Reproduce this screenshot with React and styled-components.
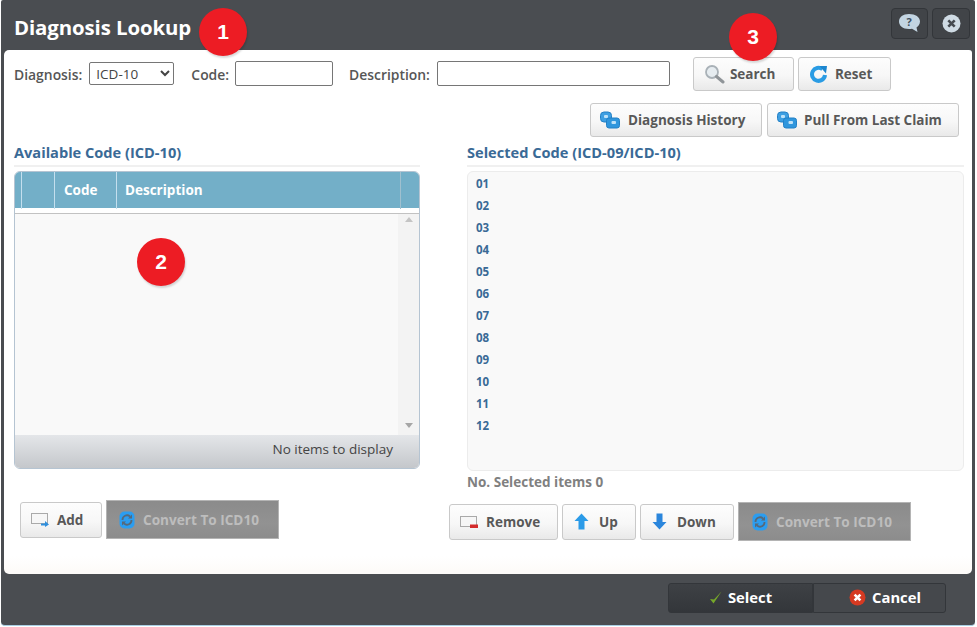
import React from "react";
import styled, { createGlobalStyle } from "styled-components";

const GlobalStyle = createGlobalStyle`
  html, body {
    margin: 0;
    padding: 0;
    background: #fff;
    font-family: "Open Sans", "Liberation Sans", sans-serif;
  }
`;

const Page = styled.div`
  width: 977px;
  height: 627px;
  overflow: hidden;
  position: relative;
  background: #fff;
`;

const Dialog = styled.div`
  width: 974px;
  height: 625px;
  margin-left: 1px;
  background: #4a4d51;
  border-bottom: 1px solid #a9cfe3;
  border-radius: 2px 2px 4px 4px;
  box-sizing: content-box;
  display: flex;
  flex-direction: column;
`;

const TitleBar = styled.div`
  height: 50px;
  display: flex;
  justify-content: space-between;
  padding: 8px 5px 0 13px;
  box-sizing: border-box;
`;

const Title = styled.h1`
  margin: 6px 0 0;
  font-size: 20.4px;
  line-height: 27px;
  font-weight: 700;
  color: #fff;
  letter-spacing: -0.1px;
`;

const TitleActions = styled.div`
  display: flex;
  gap: 4px;
`;

const IconTile = styled.div`
  width: ${(p) => p.$w}px;
  height: 31px;
  border: 1px solid #33363a;
  border-radius: 4px;
  background: #414448;
  box-sizing: border-box;
  display: flex;
  align-items: center;
  justify-content: center;
`;

const Panel = styled.div`
  margin: 0 3px;
  height: 524px;
  background: linear-gradient(#fff 0, #fff 506px, #fdfbf9 520px);
  border-radius: 5px 3px 5px 5px;
  padding: 7px 13px 0 10px;
  box-sizing: border-box;
  display: flex;
  flex-direction: column;
`;

const SearchRow = styled.div`
  display: flex;
  align-items: center;
  height: 34px;
`;

const Label = styled.label`
  font-size: 13.9px;
  font-weight: 600;
  color: #565656;
  white-space: nowrap;
  margin-left: ${(p) => p.$left || 0}px;
  margin-right: ${(p) => p.$right || 0}px;
`;

const Select = styled.select`
  width: 85px;
  height: 23px;
  flex: none;
  margin-bottom: 1px;
  font-family: "Open Sans", sans-serif;
  font-size: 13.5px;
  color: #444;
  background: #fff;
  border: 1px solid #767676;
  border-radius: 2px;
  padding: 0 0 0 2px;
`;

const TextInput = styled.input`
  width: ${(p) => p.$w}px;
  height: 25px;
  flex: none;
  margin-bottom: 2px;
  border: 1px solid #767676;
  border-radius: 2px;
  background: #fff;
  box-sizing: border-box;
  padding: 0 4px;
`;

const Button = styled.button`
  width: ${(p) => p.$w}px;
  height: ${(p) => p.$h || 34}px;
  display: flex;
  align-items: center;
  gap: ${(p) => p.$gap || 8}px;
  padding: 0 0 0 ${(p) => p.$pad || 10}px;
  box-sizing: border-box;
  border: 1px solid #c9c9c9;
  border-radius: 3px;
  background: linear-gradient(#fdfdfd, #f7f7f7 55%, #e9e9e9);
  font-family: "Open Sans", sans-serif;
  font-size: 13.5px;
  font-weight: 700;
  color: #585858;
  white-space: nowrap;
  flex: none;
`;

const GreyButton = styled.button`
  width: ${(p) => p.$w}px;
  height: 39px;
  display: flex;
  align-items: center;
  gap: 8px;
  padding: 0 0 0 ${(p) => p.$pad || 12}px;
  box-sizing: border-box;
  border: 1px solid #b4b4b4;
  background: linear-gradient(#8b8b8b, #929292 60%, #8c8c8c);
  font-family: "Open Sans", sans-serif;
  font-size: 13.6px;
  font-weight: 700;
  color: #bdbdbd;
  white-space: nowrap;
  flex: none;
`;

const ActionsRight = styled.div`
  display: flex;
  gap: 4px;
  margin-left: 23px;
`;

const HistoryRow = styled.div`
  display: flex;
  justify-content: flex-end;
  gap: 5px;
  margin-top: 12px;
`;

const Columns = styled.div`
  display: grid;
  grid-template-columns: 406px 497px;
  column-gap: 47px;
  margin-top: 5px;
`;

const Column = styled.div`
  display: flex;
  flex-direction: column;
`;

const SectionTitle = styled.h2`
  margin: 0;
  height: 23px;
  font-size: 14.6px;
  line-height: 21px;
  font-weight: 700;
  color: #3a6a96;
  border-bottom: 2px solid #f0f0f0;
  box-sizing: content-box;
  white-space: nowrap;
`;

const Grid = styled.div`
  margin-top: 4px;
  height: 298px;
  border: 1px solid #b5c4d2;
  border-radius: 6px;
  box-sizing: border-box;
  overflow: hidden;
  display: flex;
  flex-direction: column;
  background: #f9f9f9;
`;

const GridHead = styled.div`
  height: 36px;
  flex: none;
  background: #73afc8;
  display: grid;
  grid-template-columns: 7px 33px 62px 1fr 18px;
  border-bottom: 5px solid #fff;
  box-shadow: 0 1px 0 #c2c2c2;
`;

const HeadCell = styled.div`
  border-right: 1px solid #c4dfee;
  font-size: 13.5px;
  font-weight: 700;
  color: #fff;
  line-height: 37px;
  padding-left: ${(p) => p.$pad || 0}px;
  &:last-child {
    border-right: 0;
    border-left: 1px solid #a0c0cf;
    margin-left: -1px;
  }
`;

const GridBody = styled.div`
  flex: 1;
  display: flex;
  justify-content: flex-end;
  margin-top: 1px;
`;

const ScrollTrack = styled.div`
  width: 21px;
  background: #f3f3f3;
  display: flex;
  flex-direction: column;
  justify-content: space-between;
  align-items: center;
  padding: 3px 0 7px;
  box-sizing: border-box;
`;

const Arrow = styled.span`
  width: 0;
  height: 0;
  border-left: 4px solid transparent;
  border-right: 4px solid transparent;
  ${(p) =>
    p.$up ? "border-bottom: 5px solid #c4c4c4;" : "border-top: 5px solid #a6a6a6;"}
`;

const GridFooter = styled.div`
  height: 33px;
  flex: none;
  background: linear-gradient(#e4e6e9, #c4c7cb);
  font-size: 13.5px;
  line-height: 29px;
  color: #444;
  text-align: right;
  padding-right: 26px;
`;

const SelectedBox = styled.div`
  margin-top: 4px;
  height: 300px;
  border: 1px solid #ececec;
  border-radius: 6px;
  background: #f9f9f9;
  box-sizing: border-box;
  padding: 1px 0 0 8px;
`;

const CodeRow = styled.div`
  height: 22px;
  line-height: 22px;
  font-size: 11.5px;
  font-weight: 700;
  color: #3a6a96;
`;

const SelectedCount = styled.div`
  font-size: 13.5px;
  font-weight: 700;
  color: #808080;
  margin-top: 2px;
  line-height: 19px;
`;

const ButtonRowLeft = styled.div`
  display: flex;
  align-items: center;
  gap: 4px;
  margin: 31px 0 0 6px;
`;

const ButtonRowRight = styled.div`
  display: flex;
  align-items: center;
  gap: 4px;
  margin: 10px 0 0 -18px;
`;

const Footer = styled.div`
  flex: 1;
  display: flex;
  justify-content: flex-end;
  padding: 9px 29px 0 0;
  box-sizing: border-box;
`;

const FooterButton = styled.button`
  width: ${(p) => p.$w}px;
  height: 30px;
  display: flex;
  align-items: center;
  justify-content: center;
  gap: 6px;
  border: 1px solid #33363a;
  border-radius: ${(p) => (p.$first ? "3px 0 0 3px" : "0 3px 3px 0")};
  background: ${(p) => (p.$first ? "linear-gradient(#3e4145, #33363a)" : "#45484c")};
  font-family: "Open Sans", sans-serif;
  font-size: 14.8px;
  line-height: 26px;
  font-weight: 700;
  color: #fff;
  padding: 0 0 2px ${(p) => p.$shift || 0}px;
`;

const Badge = styled.div`
  position: absolute;
  left: ${(p) => p.$x - 24}px;
  top: ${(p) => p.$y - 24}px;
  width: 48px;
  height: 48px;
  border-radius: 50%;
  background: #ed1c24;
  color: #fff;
  font-family: "Liberation Sans", sans-serif;
  font-size: 21px;
  font-weight: 700;
  display: flex;
  align-items: center;
  justify-content: center;
  box-shadow: 1px 2px 2px rgba(0, 0, 0, 0.15);
`;

const MagnifierIcon = () => (
  <svg width="22" height="20" viewBox="0 0 22 20">
    <circle cx="8" cy="8" r="6" fill="#e6ecf0" stroke="#a9b1b7" strokeWidth="1.8" />
    <path d="M12.5 12.5 L19 18" stroke="#8f9498" strokeWidth="3" strokeLinecap="round" />
  </svg>
);

const ResetIcon = () => (
  <svg width="18" height="18" viewBox="0 0 18 18">
    <path d="M12.5 4.2 A6.5 6.5 0 1 0 15 10" fill="none" stroke="#2a9ce4" strokeWidth="4" />
    <path d="M9.5 1 L17 1 L16 8.5 Z" fill="#1c86cf" />
  </svg>
);

const HistoryIcon = () => (
  <svg width="20" height="18" viewBox="0 0 20 18">
    <rect x="0.5" y="1" width="11" height="10" rx="3.5" fill="#3e9fe2" stroke="#2380c6" />
    <rect x="4" y="4" width="4" height="3" rx="1" fill="#bfe2f8" />
    <rect x="6.5" y="7" width="13" height="10" rx="2.5" fill="#2f96dd" stroke="#2380c6" />
    <rect x="11.5" y="10" width="4.5" height="3" rx="1" fill="#bfe2f8" />
  </svg>
);

const AddIcon = () => (
  <svg width="19" height="15" viewBox="0 0 19 15">
    <rect x="0.5" y="1.5" width="16" height="10" fill="#f6f6f6" stroke="#a9a9a9" />
    <path d="M10 11.5 h4 v-2.5 l4 3.5 -4 2.5 v-1.5 h-4 Z" fill="#2f8fdd" />
  </svg>
);

const RemoveIcon = () => (
  <svg width="19" height="14" viewBox="0 0 19 14">
    <rect x="0.5" y="1.5" width="16" height="10" fill="#f6f6f6" stroke="#a9a9a9" />
    <rect x="10" y="9.5" width="8" height="3.5" fill="#d32b2b" />
  </svg>
);

const UpIcon = () => (
  <svg width="15" height="17" viewBox="0 0 15 17">
    <path d="M7.5 0.5 L14.5 8 H10.5 V16.5 H4.5 V8 H0.5 Z" fill="#2b9be8" />
  </svg>
);

const DownIcon = () => (
  <svg width="15" height="17" viewBox="0 0 15 17">
    <path d="M7.5 16.5 L14.5 9 H10.5 V0.5 H4.5 V9 H0.5 Z" fill="#2b86dc" />
  </svg>
);

const ConvertIcon = () => (
  <svg width="16" height="18" viewBox="0 0 16 18">
    <rect x="0.5" y="0.5" width="15" height="17" rx="5" fill="#2b9df0" />
    <path d="M3.5 9 A4.5 4.5 0 0 1 11 5.5 M12.5 9 A4.5 4.5 0 0 1 5 12.5" fill="none" stroke="#56697a" strokeWidth="1.8" />
    <path d="M9 7.5 L13 7.5 L13 3.5 Z M7 10.5 L3 10.5 L3 14.5 Z" fill="#56697a" />
  </svg>
);

const HelpIcon = () => (
  <svg width="25" height="21" viewBox="0 0 25 21">
    <path d="M12 1 C18.5 1 23 4 23 8.5 C23 11.5 21 13.5 19.5 14.5 L20.5 19 L15 15.7 C14 15.9 13 16 12 16 C5.5 16 2 12.5 2 8.5 C2 4 6 1 12 1 Z" fill="#c3d5e2" />
    <text x="12" y="12.5" fontSize="11" fontWeight="700" fontFamily="Open Sans, sans-serif" textAnchor="middle" fill="#3e4f5c">?</text>
  </svg>
);

const CloseIcon = () => (
  <svg width="19" height="19" viewBox="0 0 19 19">
    <circle cx="9.5" cy="9.5" r="9" fill="#cfdbe4" />
    <path d="M6.3 6.3 L12.7 12.7 M12.7 6.3 L6.3 12.7" stroke="#454a50" strokeWidth="2.6" />
  </svg>
);

const CheckIcon = () => (
  <svg width="13" height="13" viewBox="0 0 13 13">
    <path d="M1 8 L4.5 12.5 L12.5 0.5 L5 8.5 Z" fill="#76a82a" />
  </svg>
);

const CancelIcon = () => (
  <svg width="17" height="17" viewBox="0 0 17 17">
    <circle cx="8.5" cy="8.5" r="8" fill="#d63a22" />
    <path d="M5.6 5.6 L11.4 11.4 M11.4 5.6 L5.6 11.4" stroke="#fff" strokeWidth="2.6" />
  </svg>
);

const codes = ["01", "02", "03", "04", "05", "06", "07", "08", "09", "10", "11", "12"];

export default function App() {
  return (
    <Page>
      <GlobalStyle />
      <Dialog>
        <TitleBar>
          <Title>Diagnosis Lookup</Title>
          <TitleActions>
            <IconTile $w={37}>
              <HelpIcon />
            </IconTile>
            <IconTile $w={38}>
              <CloseIcon />
            </IconTile>
          </TitleActions>
        </TitleBar>
        <Panel>
          <SearchRow>
            <Label $right={7}>Diagnosis:</Label>
            <Select defaultValue="ICD-10">
              <option>ICD-10</option>
              <option>ICD-09</option>
            </Select>
            <Label $left={17} $right={6}>Code:</Label>
            <TextInput $w={98} />
            <Label $left={16} $right={7}>Description:</Label>
            <TextInput $w={233} />
            <ActionsRight>
              <Button $w={101} $gap={4}>
                <MagnifierIcon />
                Search
              </Button>
              <Button $w={93} $pad={11} $gap={7}>
                <ResetIcon />
                Reset
              </Button>
            </ActionsRight>
          </SearchRow>
          <HistoryRow>
            <Button $w={172} $pad={9} $gap={8}>
              <HistoryIcon />
              Diagnosis History
            </Button>
            <Button $w={192} $pad={9} $gap={7}>
              <HistoryIcon />
              Pull From Last Claim
            </Button>
          </HistoryRow>
          <Columns>
            <Column>
              <SectionTitle>Available Code (ICD-10)</SectionTitle>
              <Grid>
                <GridHead>
                  <HeadCell />
                  <HeadCell />
                  <HeadCell $pad={9}>Code</HeadCell>
                  <HeadCell $pad={8}>Description</HeadCell>
                  <HeadCell />
                </GridHead>
                <GridBody>
                  <ScrollTrack>
                    <Arrow $up />
                    <Arrow />
                  </ScrollTrack>
                </GridBody>
                <GridFooter>No items to display</GridFooter>
              </Grid>
              <ButtonRowLeft>
                <Button $w={82} $h={36} $pad={10} $gap={7}>
                  <AddIcon />
                  Add
                </Button>
                <GreyButton $w={173}>
                  <ConvertIcon />
                  Convert To ICD10
                </GreyButton>
              </ButtonRowLeft>
            </Column>
            <Column>
              <SectionTitle>Selected Code (ICD-09/ICD-10)</SectionTitle>
              <SelectedBox>
                {codes.map((c) => (
                  <CodeRow key={c}>{c}</CodeRow>
                ))}
              </SelectedBox>
              <SelectedCount>No. Selected items 0</SelectedCount>
              <ButtonRowRight>
                <Button $w={109} $h={36} $pad={10} $gap={7}>
                  <RemoveIcon />
                  Remove
                </Button>
                <Button $w={74} $h={36} $pad={11} $gap={10}>
                  <UpIcon />
                  Up
                </Button>
                <Button $w={94} $h={36} $pad={11} $gap={10}>
                  <DownIcon />
                  Down
                </Button>
                <GreyButton $w={173} $pad={13}>
                  <ConvertIcon />
                  Convert To ICD10
                </GreyButton>
              </ButtonRowRight>
            </Column>
          </Columns>
        </Panel>
        <Footer>
          <FooterButton $first $w={145}>
            <CheckIcon />
            Select
          </FooterButton>
          <FooterButton $w={133} $shift={11}>
            <CancelIcon />
            Cancel
          </FooterButton>
        </Footer>
      </Dialog>
      <Badge $x={223} $y={32}>1</Badge>
      <Badge $x={161} $y={262}>2</Badge>
      <Badge $x={753} $y={37}>3</Badge>
    </Page>
  );
}
